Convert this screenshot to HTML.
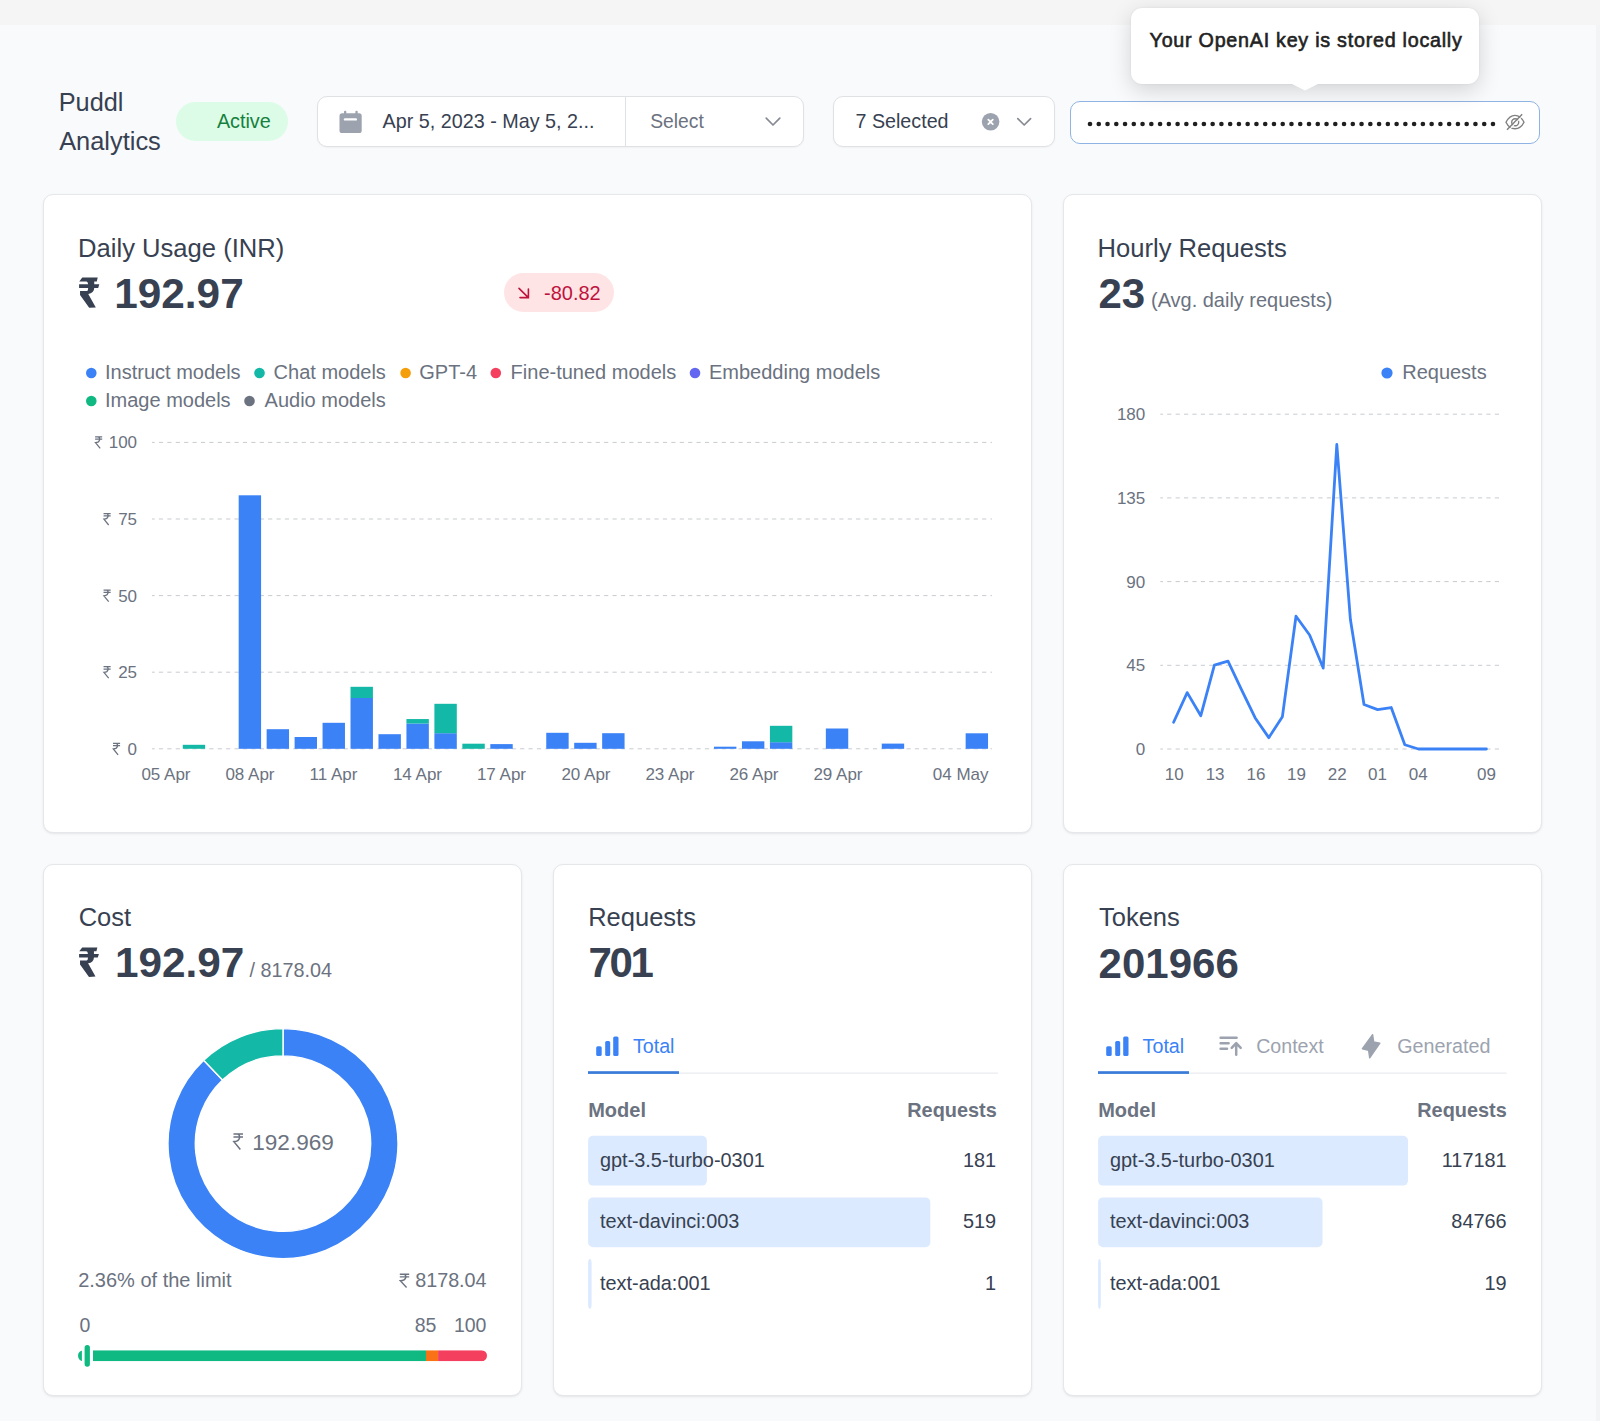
<!DOCTYPE html>
<html><head><meta charset="utf-8"><style>
html,body{margin:0;padding:0}
body{width:1600px;height:1421px;position:relative;overflow:hidden;background:#f9fafb;font-family:"Liberation Sans", sans-serif}
.abs{position:absolute}
.card{position:absolute;box-sizing:border-box;background:#fff;border:1px solid #e5e7eb;border-radius:10px;box-shadow:0 1px 3px 0 rgba(0,0,0,0.07),0 1px 2px -1px rgba(0,0,0,0.07)}
.box{position:absolute;box-sizing:border-box;background:#fff;border:1px solid #dfe1e5;border-radius:10px;box-shadow:0 1px 2px rgba(0,0,0,0.04)}
</style></head><body>
<div class="abs" style="left:0;top:0;width:1600px;height:25px;background:#f5f5f5"></div>
<div class="abs" style="left:1596px;top:25px;width:4px;height:1396px;background:#f3f4f6"></div>
<div class="card" style="left:43.2px;top:194px;width:988.80px;height:638.60px"></div>
<div class="card" style="left:1063px;top:194px;width:478.60px;height:638.60px"></div>
<div class="card" style="left:43.2px;top:863.6px;width:478.80px;height:532.40px"></div>
<div class="card" style="left:553px;top:863.6px;width:479.00px;height:532.40px"></div>
<div class="card" style="left:1063px;top:863.6px;width:478.60px;height:532.40px"></div>
<div class="abs" style="left:175.5px;top:102.4px;width:112.5px;height:38.8px;border-radius:20px;background:#dcfce7"></div>
<div class="abs" style="left:504.3px;top:273.1px;width:109.3px;height:38.9px;border-radius:20px;background:#ffe4e6"></div>
<div class="box" style="left:316.7px;top:96.4px;width:487.5px;height:51px"></div>
<div class="abs" style="left:625px;top:97.4px;width:1px;height:49px;background:#dfe1e5"></div>
<div class="box" style="left:832.6px;top:96.4px;width:222.8px;height:50.8px"></div>
<div class="box" style="left:1070.3px;top:100.5px;width:470.2px;height:43px;border:1.4px solid #8fb3e3;box-shadow:none"></div>
<div class="abs" style="left:1131px;top:8px;width:348px;height:75.7px;background:#fff;border-radius:11px;box-shadow:0 6px 22px rgba(0,0,0,0.16),0 0 2px rgba(0,0,0,0.08)"></div>
<svg class="abs" style="left:1290px;top:83px" width="30" height="10"><path d="M0,0 L15,7.5 L30,0 Z" fill="#fff"/></svg>
<svg width="1600" height="1421" style="position:absolute;left:0;top:0" font-family='"Liberation Sans", sans-serif'><line x1="152" y1="748.80" x2="992" y2="748.80" stroke="#c9cbcf" stroke-width="1" stroke-dasharray="4.2 4.2" stroke-dashoffset="1.5"/><line x1="152" y1="672.20" x2="992" y2="672.20" stroke="#c9cbcf" stroke-width="1" stroke-dasharray="4.2 4.2" stroke-dashoffset="1.5"/><line x1="152" y1="595.60" x2="992" y2="595.60" stroke="#c9cbcf" stroke-width="1" stroke-dasharray="4.2 4.2" stroke-dashoffset="1.5"/><line x1="152" y1="519.00" x2="992" y2="519.00" stroke="#c9cbcf" stroke-width="1" stroke-dasharray="4.2 4.2" stroke-dashoffset="1.5"/><line x1="152" y1="442.40" x2="992" y2="442.40" stroke="#c9cbcf" stroke-width="1" stroke-dasharray="4.2 4.2" stroke-dashoffset="1.5"/><rect x="182.76" y="744.80" width="22.4" height="4.00" fill="#14b8a6"/><rect x="238.68" y="495.30" width="22.4" height="253.50" fill="#3b82f6"/><rect x="266.64" y="729.20" width="22.4" height="19.60" fill="#3b82f6"/><rect x="294.60" y="737.00" width="22.4" height="11.80" fill="#3b82f6"/><rect x="322.56" y="722.80" width="22.4" height="26.00" fill="#3b82f6"/><rect x="350.52" y="698.00" width="22.4" height="50.80" fill="#3b82f6"/><rect x="350.52" y="686.80" width="22.4" height="11.20" fill="#14b8a6"/><rect x="378.48" y="734.20" width="22.4" height="14.60" fill="#3b82f6"/><rect x="406.44" y="723.50" width="22.4" height="25.30" fill="#3b82f6"/><rect x="406.44" y="719.05" width="22.4" height="4.45" fill="#14b8a6"/><rect x="434.40" y="733.20" width="22.4" height="15.60" fill="#3b82f6"/><rect x="434.40" y="703.80" width="22.4" height="29.40" fill="#14b8a6"/><rect x="462.36" y="743.70" width="22.4" height="5.10" fill="#14b8a6"/><rect x="490.32" y="744.10" width="22.4" height="4.70" fill="#3b82f6"/><rect x="546.24" y="732.80" width="22.4" height="16.00" fill="#3b82f6"/><rect x="574.20" y="742.80" width="22.4" height="6.00" fill="#3b82f6"/><rect x="602.16" y="733.20" width="22.4" height="15.60" fill="#3b82f6"/><rect x="714.00" y="746.70" width="22.4" height="2.10" fill="#3b82f6"/><rect x="741.96" y="741.30" width="22.4" height="7.50" fill="#3b82f6"/><rect x="769.92" y="742.20" width="22.4" height="6.60" fill="#3b82f6"/><rect x="769.92" y="725.80" width="22.4" height="16.40" fill="#14b8a6"/><rect x="825.84" y="728.50" width="22.4" height="20.30" fill="#3b82f6"/><rect x="881.76" y="743.60" width="22.4" height="5.20" fill="#3b82f6"/><rect x="965.64" y="733.30" width="22.4" height="15.50" fill="#3b82f6"/><line x1="1160.3" y1="749.00" x2="1500" y2="749.00" stroke="#c9cbcf" stroke-width="1" stroke-dasharray="4.2 4.2" stroke-dashoffset="1.5"/><line x1="1160.3" y1="665.30" x2="1500" y2="665.30" stroke="#c9cbcf" stroke-width="1" stroke-dasharray="4.2 4.2" stroke-dashoffset="1.5"/><line x1="1160.3" y1="581.60" x2="1500" y2="581.60" stroke="#c9cbcf" stroke-width="1" stroke-dasharray="4.2 4.2" stroke-dashoffset="1.5"/><line x1="1160.3" y1="497.90" x2="1500" y2="497.90" stroke="#c9cbcf" stroke-width="1" stroke-dasharray="4.2 4.2" stroke-dashoffset="1.5"/><line x1="1160.3" y1="414.20" x2="1500" y2="414.20" stroke="#c9cbcf" stroke-width="1" stroke-dasharray="4.2 4.2" stroke-dashoffset="1.5"/><polyline points="1173.60,722.22 1187.20,692.64 1200.80,715.71 1214.40,665.11 1228.00,661.21 1241.60,689.85 1255.20,717.94 1268.80,737.65 1282.40,716.64 1296.00,616.20 1309.60,634.98 1323.20,668.09 1336.80,444.52 1350.40,619.54 1364.00,704.55 1377.60,709.57 1391.20,707.52 1404.80,744.72 1418.40,749.00 1432.00,749.00 1445.60,749.00 1459.20,749.00 1472.80,749.00 1486.40,749.00" fill="none" stroke="#3b82f6" stroke-width="2.8" stroke-linejoin="round" stroke-linecap="round"/><circle cx="91.3" cy="373" r="5.3" fill="#3b82f6"/><circle cx="259.5" cy="373" r="5.3" fill="#14b8a6"/><circle cx="405.6" cy="373" r="5.3" fill="#f59e0b"/><circle cx="495.8" cy="373" r="5.3" fill="#f43f5e"/><circle cx="695" cy="373" r="5.3" fill="#6366f1"/><circle cx="91.3" cy="401" r="5.3" fill="#10b981"/><circle cx="249.5" cy="401" r="5.3" fill="#6b7280"/><circle cx="1387" cy="373" r="5.6" fill="#3b82f6"/><path d="M283.00,1028.60 A115,115 0 1 1 203.69,1060.32 L222.52,1080.09 A87.7,87.7 0 1 0 283.00,1055.90 Z" fill="#3b82f6" stroke="#fff" stroke-width="1.4"/><path d="M203.69,1060.32 A115,115 0 0 1 283.00,1028.60 L283.00,1055.90 A87.7,87.7 0 0 0 222.52,1080.09 Z" fill="#14b8a6" stroke="#fff" stroke-width="1.4"/><clipPath id="mb"><rect x="78" y="1350.25" width="409" height="11" rx="5.5"/></clipPath><g clip-path="url(#mb)"><rect x="78" y="1350.25" width="348" height="11" fill="#10b981"/><rect x="426" y="1350.25" width="12.1" height="11" fill="#f97316"/><rect x="438.1" y="1350.25" width="49" height="11" fill="#f43f5e"/></g><rect x="81.9" y="1342.3" width="11.1" height="27.2" rx="5.5" fill="#fff"/><rect x="84.6" y="1345" width="5.3" height="21.75" rx="2.65" fill="#10b981"/><rect x="588.1" y="1135.80" width="118.80" height="49.8" rx="5" fill="#dbeafe"/><rect x="588.1" y="1197.40" width="342.20" height="49.8" rx="5" fill="#dbeafe"/><rect x="588.1" y="1259.00" width="3.50" height="49.8" rx="5" fill="#dbeafe"/><rect x="1098.1" y="1135.80" width="309.90" height="49.8" rx="5" fill="#dbeafe"/><rect x="1098.1" y="1197.40" width="224.40" height="49.8" rx="5" fill="#dbeafe"/><rect x="1098.1" y="1259.00" width="2.70" height="49.8" rx="5" fill="#dbeafe"/><rect x="596.20" y="1046.2" width="5.5" height="9.7" rx="1.5" fill="#3b82f6"/><rect x="605.20" y="1041" width="5" height="14.9" rx="1.5" fill="#3b82f6"/><rect x="613.20" y="1036.6" width="5.3" height="19.3" rx="1.5" fill="#3b82f6"/><rect x="588" y="1072.6" width="410" height="1" fill="#e5e7eb"/><rect x="588" y="1071.2" width="91" height="2.7" fill="#3a7ad9"/><rect x="1106.20" y="1046.2" width="5.5" height="9.7" rx="1.5" fill="#3b82f6"/><rect x="1115.20" y="1041" width="5" height="14.9" rx="1.5" fill="#3b82f6"/><rect x="1123.20" y="1036.6" width="5.3" height="19.3" rx="1.5" fill="#3b82f6"/><rect x="1098" y="1072.6" width="408.5" height="1" fill="#e5e7eb"/><rect x="1098" y="1071.2" width="91" height="2.7" fill="#3a7ad9"/><g stroke="#9ca3af" stroke-width="2.5" stroke-linecap="round" stroke-linejoin="round" fill="none"><path d="M1220.6,1037.8 H1236.6 M1220.6,1043.3 H1228.6 M1220.6,1048.8 H1227"/><path d="M1236.2,1054.8 V1043.6 M1231.7,1047.9 L1236.2,1043.1 L1240.7,1047.9"/></g><path d="M1372.6,1034.6 L1362.4,1048.7 L1368.6,1050.2 L1369.7,1057.8 L1379.9,1043.2 L1373.7,1042 Z" fill="#9ca3af" stroke="#9ca3af" stroke-width="1.4" stroke-linejoin="round"/><g stroke="#be123c" stroke-width="1.6" fill="none" stroke-linecap="round"><path d="M519,288.4 L528.4,297.6 M520,297.6 H528.4 V289"/></g><rect x="339.5" y="113.3" width="22.2" height="19.7" rx="2.6" fill="#9ca3af"/><rect x="344" y="110.7" width="2.3" height="4" rx="1" fill="#9ca3af"/><rect x="355.4" y="110.7" width="2.3" height="4" rx="1" fill="#9ca3af"/><rect x="343.8" y="118.2" width="13.2" height="2.4" rx="1.2" fill="#fff"/><path d="M766.2,118.2 L773,125 L779.8,118.2" stroke="#858a93" stroke-width="1.7" fill="none" stroke-linecap="round" stroke-linejoin="round"/><path d="M1017.8,118.6 L1024.2,125 L1030.6,118.6" stroke="#858a93" stroke-width="1.7" fill="none" stroke-linecap="round" stroke-linejoin="round"/><circle cx="990.6" cy="121.75" r="8.8" fill="#9ca3af"/><path d="M988.3,119.6 L992.8,124.1 M992.8,119.6 L988.3,124.1" stroke="#fff" stroke-width="1.8" stroke-linecap="round"/><circle cx="1090.00" cy="124" r="2.3" fill="#1f1f1f"/><circle cx="1098.76" cy="124" r="2.3" fill="#1f1f1f"/><circle cx="1107.52" cy="124" r="2.3" fill="#1f1f1f"/><circle cx="1116.28" cy="124" r="2.3" fill="#1f1f1f"/><circle cx="1125.04" cy="124" r="2.3" fill="#1f1f1f"/><circle cx="1133.80" cy="124" r="2.3" fill="#1f1f1f"/><circle cx="1142.56" cy="124" r="2.3" fill="#1f1f1f"/><circle cx="1151.32" cy="124" r="2.3" fill="#1f1f1f"/><circle cx="1160.08" cy="124" r="2.3" fill="#1f1f1f"/><circle cx="1168.84" cy="124" r="2.3" fill="#1f1f1f"/><circle cx="1177.60" cy="124" r="2.3" fill="#1f1f1f"/><circle cx="1186.36" cy="124" r="2.3" fill="#1f1f1f"/><circle cx="1195.12" cy="124" r="2.3" fill="#1f1f1f"/><circle cx="1203.88" cy="124" r="2.3" fill="#1f1f1f"/><circle cx="1212.64" cy="124" r="2.3" fill="#1f1f1f"/><circle cx="1221.40" cy="124" r="2.3" fill="#1f1f1f"/><circle cx="1230.16" cy="124" r="2.3" fill="#1f1f1f"/><circle cx="1238.92" cy="124" r="2.3" fill="#1f1f1f"/><circle cx="1247.68" cy="124" r="2.3" fill="#1f1f1f"/><circle cx="1256.44" cy="124" r="2.3" fill="#1f1f1f"/><circle cx="1265.20" cy="124" r="2.3" fill="#1f1f1f"/><circle cx="1273.96" cy="124" r="2.3" fill="#1f1f1f"/><circle cx="1282.72" cy="124" r="2.3" fill="#1f1f1f"/><circle cx="1291.48" cy="124" r="2.3" fill="#1f1f1f"/><circle cx="1300.24" cy="124" r="2.3" fill="#1f1f1f"/><circle cx="1309.00" cy="124" r="2.3" fill="#1f1f1f"/><circle cx="1317.76" cy="124" r="2.3" fill="#1f1f1f"/><circle cx="1326.52" cy="124" r="2.3" fill="#1f1f1f"/><circle cx="1335.28" cy="124" r="2.3" fill="#1f1f1f"/><circle cx="1344.04" cy="124" r="2.3" fill="#1f1f1f"/><circle cx="1352.80" cy="124" r="2.3" fill="#1f1f1f"/><circle cx="1361.56" cy="124" r="2.3" fill="#1f1f1f"/><circle cx="1370.32" cy="124" r="2.3" fill="#1f1f1f"/><circle cx="1379.08" cy="124" r="2.3" fill="#1f1f1f"/><circle cx="1387.84" cy="124" r="2.3" fill="#1f1f1f"/><circle cx="1396.60" cy="124" r="2.3" fill="#1f1f1f"/><circle cx="1405.36" cy="124" r="2.3" fill="#1f1f1f"/><circle cx="1414.12" cy="124" r="2.3" fill="#1f1f1f"/><circle cx="1422.88" cy="124" r="2.3" fill="#1f1f1f"/><circle cx="1431.64" cy="124" r="2.3" fill="#1f1f1f"/><circle cx="1440.40" cy="124" r="2.3" fill="#1f1f1f"/><circle cx="1449.16" cy="124" r="2.3" fill="#1f1f1f"/><circle cx="1457.92" cy="124" r="2.3" fill="#1f1f1f"/><circle cx="1466.68" cy="124" r="2.3" fill="#1f1f1f"/><circle cx="1475.44" cy="124" r="2.3" fill="#1f1f1f"/><circle cx="1484.20" cy="124" r="2.3" fill="#1f1f1f"/><circle cx="1492.96" cy="124" r="2.3" fill="#1f1f1f"/><g stroke="#808080" stroke-width="1.4" fill="none"><path d="M1506,122.3 C1508.5,117.3 1512,115.4 1515,115.4 C1518,115.4 1521.5,117.3 1524,122.3 C1521.5,127.3 1518,128.8 1515,128.8 C1512,128.8 1508.5,127.3 1506,122.3 Z"/><circle cx="1515.2" cy="122.3" r="3.5"/><path d="M1508.1,130.8 L1523.3,115.2" stroke="#fff" stroke-width="1.1"/><path d="M1507,129.8 L1522.2,114.2"/></g><path transform="translate(79.10,277.60) scale(0.03156,0.03162)" d="M100,0 L590,0 L560,120 L480,120 L480,210 L640,210 L605,325 L480,325 C475,430 410,500 290,515 L530,945 L320,955 L30,550 L30,420 L250,420 C280,415 285,370 285,325 L0,325 L0,210 L285,210 C280,150 255,125 230,125 L5,125 Z" fill="#374151"/><path transform="translate(79.10,947.50) scale(0.03094,0.03079)" d="M100,0 L590,0 L560,120 L480,120 L480,210 L640,210 L605,325 L480,325 C475,430 410,500 290,515 L530,945 L320,955 L30,550 L30,420 L250,420 C280,415 285,370 285,325 L0,325 L0,210 L285,210 C280,150 255,125 230,125 L5,125 Z" fill="#374151"/><path d="M233.45,1134.01 L243.00,1134.01 M233.45,1137.09 L243.00,1137.09 M237.46,1134.01 C240.61,1134.50 241.09,1141.30 233.93,1141.62 L240.33,1149.40" stroke="#6b7280" stroke-width="1.5" fill="none"/><path d="M399.80,1274.19 L409.20,1274.19 M399.80,1276.84 L409.20,1276.84 M403.75,1274.19 C406.85,1274.61 407.32,1280.45 400.27,1280.73 L406.57,1287.40" stroke="#6b7280" stroke-width="1.4" fill="none"/><path d="M113.00,743.30 L120.10,743.30 M113.00,745.60 L120.10,745.60 M115.98,743.30 C118.32,743.67 118.68,748.75 113.36,748.99 L118.11,754.80" stroke="#6b7280" stroke-width="1.25" fill="none"/><path d="M103.55,666.70 L110.65,666.70 M103.55,669.00 L110.65,669.00 M106.53,666.70 C108.87,667.07 109.23,672.15 103.90,672.39 L108.66,678.20" stroke="#6b7280" stroke-width="1.25" fill="none"/><path d="M103.55,590.10 L110.65,590.10 M103.55,592.40 L110.65,592.40 M106.53,590.10 C108.87,590.47 109.23,595.55 103.90,595.79 L108.66,601.60" stroke="#6b7280" stroke-width="1.25" fill="none"/><path d="M103.55,513.50 L110.65,513.50 M103.55,515.80 L110.65,515.80 M106.53,513.50 C108.87,513.87 109.23,518.95 103.90,519.19 L108.66,525.00" stroke="#6b7280" stroke-width="1.25" fill="none"/><path d="M95.09,436.90 L102.19,436.90 M95.09,439.20 L102.19,439.20 M98.07,436.90 C100.42,437.27 100.77,442.35 95.45,442.59 L100.20,448.40" stroke="#6b7280" stroke-width="1.25" fill="none"/><text x="58.70" y="110.80" font-size="25.3" font-weight="400" fill="#374151">Puddl</text><text x="59.20" y="149.50" font-size="25.4" font-weight="400" fill="#374151">Analytics</text><text x="216.90" y="127.80" font-size="19.8" font-weight="400" fill="#15803d">Active</text><text x="382.60" y="128.00" font-size="19.75" font-weight="400" fill="#374151">Apr 5, 2023 - May 5, 2...</text><text x="650.20" y="128.10" font-size="19.3" font-weight="400" fill="#6b7280">Select</text><text x="855.50" y="127.90" font-size="19.7" font-weight="400" fill="#374151">7 Selected</text><text x="1149.60" y="47.40" font-size="19.7" font-weight="400" fill="#222222" letter-spacing="0.75" stroke="#222222" stroke-width="0.6">Your OpenAI key is stored locally</text><text x="78.10" y="256.70" font-size="25.6" font-weight="400" fill="#374151">Daily Usage (INR)</text><text x="114.30" y="307.80" font-size="42.3" font-weight="700" fill="#374151">192.97</text><text x="544.10" y="299.50" font-size="19.97" font-weight="400" fill="#be123c">-80.82</text><text x="105.00" y="379.40" font-size="20" font-weight="400" fill="#6b7280">Instruct models</text><text x="273.60" y="379.40" font-size="20" font-weight="400" fill="#6b7280">Chat models</text><text x="419.30" y="379.40" font-size="20" font-weight="400" fill="#6b7280">GPT-4</text><text x="510.60" y="379.40" font-size="20" font-weight="400" fill="#6b7280">Fine-tuned models</text><text x="709.00" y="379.40" font-size="20" font-weight="400" fill="#6b7280">Embedding models</text><text x="105.00" y="407.40" font-size="20" font-weight="400" fill="#6b7280">Image models</text><text x="264.60" y="407.40" font-size="20" font-weight="400" fill="#6b7280">Audio models</text><text x="127.60" y="754.80" font-size="17" font-weight="400" fill="#6b7280">0</text><text x="118.15" y="678.20" font-size="17" font-weight="400" fill="#6b7280">25</text><text x="118.15" y="601.60" font-size="17" font-weight="400" fill="#6b7280">50</text><text x="118.15" y="525.00" font-size="17" font-weight="400" fill="#6b7280">75</text><text x="108.69" y="448.40" font-size="17" font-weight="400" fill="#6b7280">100</text><text x="141.39" y="780.00" font-size="17" font-weight="400" fill="#6b7280">05 Apr</text><text x="225.39" y="780.00" font-size="17" font-weight="400" fill="#6b7280">08 Apr</text><text x="309.52" y="780.00" font-size="17" font-weight="400" fill="#6b7280">11 Apr</text><text x="392.89" y="780.00" font-size="17" font-weight="400" fill="#6b7280">14 Apr</text><text x="476.89" y="780.00" font-size="17" font-weight="400" fill="#6b7280">17 Apr</text><text x="561.39" y="780.00" font-size="17" font-weight="400" fill="#6b7280">20 Apr</text><text x="645.39" y="780.00" font-size="17" font-weight="400" fill="#6b7280">23 Apr</text><text x="729.39" y="780.00" font-size="17" font-weight="400" fill="#6b7280">26 Apr</text><text x="813.39" y="780.00" font-size="17" font-weight="400" fill="#6b7280">29 Apr</text><text x="932.75" y="780.00" font-size="17" font-weight="400" fill="#6b7280">04 May</text><text x="1097.50" y="256.70" font-size="25.6" font-weight="400" fill="#374151">Hourly Requests</text><text x="1098.50" y="307.90" font-size="42" font-weight="700" fill="#374151">23</text><text x="1151.00" y="307.20" font-size="19.97" font-weight="400" fill="#6b7280">(Avg. daily requests)</text><text x="1402.20" y="379.40" font-size="20" font-weight="400" fill="#6b7280">Requests</text><text x="1135.80" y="755.00" font-size="17" font-weight="400" fill="#6b7280">0</text><text x="1126.35" y="671.30" font-size="17" font-weight="400" fill="#6b7280">45</text><text x="1126.35" y="587.60" font-size="17" font-weight="400" fill="#6b7280">90</text><text x="1116.89" y="503.90" font-size="17" font-weight="400" fill="#6b7280">135</text><text x="1116.89" y="420.20" font-size="17" font-weight="400" fill="#6b7280">180</text><text x="1164.87" y="780.00" font-size="17" font-weight="400" fill="#6b7280">10</text><text x="1205.67" y="780.00" font-size="17" font-weight="400" fill="#6b7280">13</text><text x="1246.47" y="780.00" font-size="17" font-weight="400" fill="#6b7280">16</text><text x="1287.07" y="780.00" font-size="17" font-weight="400" fill="#6b7280">19</text><text x="1327.77" y="780.00" font-size="17" font-weight="400" fill="#6b7280">22</text><text x="1368.07" y="780.00" font-size="17" font-weight="400" fill="#6b7280">01</text><text x="1408.87" y="780.00" font-size="17" font-weight="400" fill="#6b7280">04</text><text x="1476.97" y="780.00" font-size="17" font-weight="400" fill="#6b7280">09</text><text x="78.70" y="926.20" font-size="25.5" font-weight="400" fill="#374151">Cost</text><text x="115.00" y="976.90" font-size="42.3" font-weight="700" fill="#374151">192.97</text><text x="249.50" y="976.90" font-size="19.8" font-weight="400" fill="#6b7280">/ 8178.04</text><text x="252.20" y="1149.70" font-size="22.6" font-weight="400" fill="#6b7280">192.969</text><text x="78.20" y="1287.00" font-size="20" font-weight="400" fill="#6b7280">2.36% of the limit</text><text x="415.19" y="1287.00" font-size="19.75" font-weight="400" fill="#6b7280">8178.04</text><text x="79.50" y="1331.60" font-size="19.5" font-weight="400" fill="#6b7280">0</text><text x="414.66" y="1331.60" font-size="19.5" font-weight="400" fill="#6b7280">85</text><text x="453.91" y="1331.60" font-size="19.5" font-weight="400" fill="#6b7280">100</text><text x="588.20" y="925.90" font-size="25.5" font-weight="400" fill="#374151">Requests</text><text x="588.60" y="977.10" font-size="42" font-weight="700" fill="#374151" letter-spacing="-2.4">701</text><text x="632.90" y="1052.80" font-size="19.7" font-weight="400" fill="#3b82f6">Total</text><text x="588.20" y="1116.90" font-size="20" font-weight="700" fill="#6b7280">Model</text><text x="907.23" y="1116.90" font-size="19.9" font-weight="700" fill="#6b7280">Requests</text><text x="600.00" y="1166.60" font-size="19.9" font-weight="400" fill="#374151">gpt-3.5-turbo-0301</text><text x="962.98" y="1166.60" font-size="19.9" font-weight="400" fill="#374151">181</text><text x="600.00" y="1228.20" font-size="19.9" font-weight="400" fill="#374151">text-davinci:003</text><text x="962.98" y="1228.20" font-size="19.9" font-weight="400" fill="#374151">519</text><text x="600.00" y="1289.80" font-size="19.9" font-weight="400" fill="#374151">text-ada:001</text><text x="985.10" y="1289.80" font-size="19.9" font-weight="400" fill="#374151">1</text><text x="1099.00" y="925.90" font-size="25.5" font-weight="400" fill="#374151">Tokens</text><text x="1098.60" y="977.70" font-size="42" font-weight="700" fill="#374151">201966</text><text x="1142.60" y="1052.80" font-size="19.7" font-weight="400" fill="#3b82f6">Total</text><text x="1256.20" y="1052.80" font-size="19.6" font-weight="400" fill="#9ca3af">Context</text><text x="1397.30" y="1052.80" font-size="19.7" font-weight="400" fill="#9ca3af">Generated</text><text x="1098.20" y="1116.90" font-size="20" font-weight="700" fill="#6b7280">Model</text><text x="1417.23" y="1116.90" font-size="19.9" font-weight="700" fill="#6b7280">Requests</text><text x="1110.00" y="1166.60" font-size="19.9" font-weight="400" fill="#374151">gpt-3.5-turbo-0301</text><text x="1441.77" y="1166.60" font-size="19.9" font-weight="400" fill="#374151">117181</text><text x="1110.00" y="1228.20" font-size="19.9" font-weight="400" fill="#374151">text-davinci:003</text><text x="1451.35" y="1228.20" font-size="19.9" font-weight="400" fill="#374151">84766</text><text x="1110.00" y="1289.80" font-size="19.9" font-weight="400" fill="#374151">text-ada:001</text><text x="1484.54" y="1289.80" font-size="19.9" font-weight="400" fill="#374151">19</text></svg>
</body></html>
